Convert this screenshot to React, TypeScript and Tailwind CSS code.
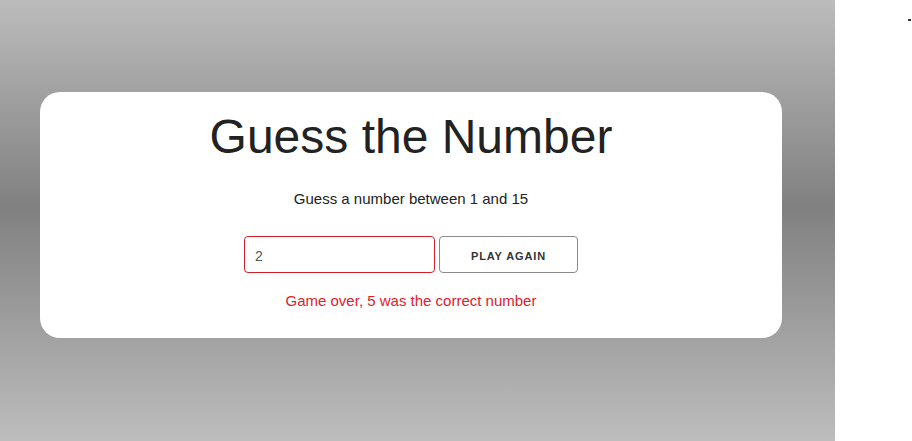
// Guess the Number — game over state
import React from "react";

export default function App() {
  return (
    <div className="flex h-[441px] w-[912px] overflow-hidden bg-white font-['Liberation_Sans',Arial,sans-serif]">
      {/* Gray backdrop */}
      <div className="h-full w-[835px] shrink-0 bg-[linear-gradient(180deg,#bcbcbc_0%,#808080_47%,#bdbdbd_100%)] pt-[92px] pl-[40px]">
        <div className="flex h-[246px] w-[742px] flex-col items-center rounded-[20px] bg-white pt-[17px]">
          <h1 className="h-[56px] text-[48px] leading-[56px] text-[#222]">Guess the Number</h1>
          <p className="mt-[24px] h-[20px] text-[15px] leading-[20px] text-[#222]">
            Guess a number between 1 and 15
          </p>
          <div className="mt-[27px] flex gap-[4px]">
            <input
              type="text"
              defaultValue="2"
              readOnly
              className="h-[37px] w-[191px] rounded-[4px] border border-[#d21f2a] bg-white px-[10px] pt-[2px] text-[14px] text-[#555] outline-none"
            />
            <button className="h-[37px] w-[139px] rounded-[4px] border border-[#8a8a8a] bg-white pt-[3px] text-[11px] font-bold tracking-[0.08em] text-[#333]">
              PLAY AGAIN
            </button>
          </div>
          <p className="mt-[18px] h-[20px] text-[15px] leading-[20px] text-[#e0202b]">
            Game over, 5 was the correct number
          </p>
        </div>
      </div>
      {/* Right white strip */}
      <div className="flex flex-1 justify-end pt-[19px] pr-[1px]">
        <span className="h-[2px] w-[3px] bg-[#333]" />
      </div>
    </div>
  );
}
